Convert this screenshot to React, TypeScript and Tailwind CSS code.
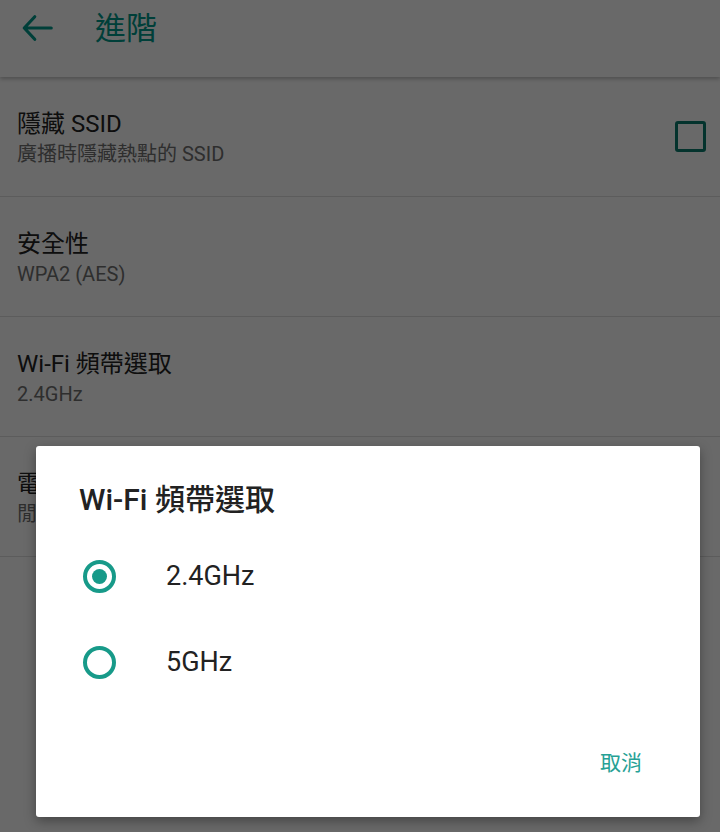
const font = "font-['Roboto','Noto_Sans_CJK_TC',sans-serif]";

type Row = { title: string; sub: string; check?: boolean };

const rows: Row[] = [
  { title: "隱藏 SSID", sub: "廣播時隱藏熱點的 SSID", check: true },
  { title: "安全性", sub: "WPA2 (AES)" },
  { title: "Wi-Fi 頻帶選取", sub: "2.4GHz" },
  { title: "電源管理", sub: "閒置時自動關閉熱點" },
];

function Radio({ on }: { on: boolean }) {
  return (
    <span className="w-[33px] h-[33px] rounded-full border-[4px] border-[#179a89] flex items-center justify-center">
      {on && <span className="w-[15px] h-[15px] rounded-full bg-[#179a89]" />}
    </span>
  );
}

export default function App() {
  return (
    <div className={`${font} relative w-[720px] h-[832px] overflow-hidden bg-[#fafafa]`}>
      <header className="h-[77px] bg-[#fafafa] shadow-[0_2px_4px_rgba(0,0,0,0.25)] relative z-10">
        <div className="h-[56px] flex items-center">
          <svg className="ml-[19px]" width="36" height="36" viewBox="0 0 24 24" fill="none" stroke="#009688" strokeWidth="2.1" strokeLinecap="round" strokeLinejoin="round">
            <path d="M21.5 12H3.5M10.5 4.5 3.5 12l7 7.5" />
          </svg>
          <span className="ml-[40px] text-[31px] text-[#009688] leading-none">進階</span>
        </div>
      </header>
      <div>
        {rows.map((r) => (
          <div key={r.title} className="h-[120px] border-b border-[#dcdcdc] flex items-center pl-[17px] pr-[14px]">
            <div className="flex-1 flex flex-col pt-[2px]">
              <span className="text-[24px] leading-[32px] text-[#222]">{r.title}</span>
              <span className="text-[20px] leading-[28px] text-[#6e6e6e]">{r.sub}</span>
            </div>
            {r.check && <span className="w-[31px] h-[31px] border-[3px] border-[#0a7a6c] rounded-[3px]" />}
          </div>
        ))}
      </div>

      <div className="absolute inset-0 bg-black/[0.58] z-20" />

      <div className="absolute z-30 left-[36px] top-[446px] w-[664px] h-[371px] bg-white rounded-[3px] shadow-[0_4px_12px_rgba(0,0,0,0.35)] flex flex-col">
        <h2 className="pl-[43px] pt-[34px] text-[30px] leading-[40px] font-medium text-[#222]">Wi-Fi 頻帶選取</h2>
        <div className="mt-[40px] flex flex-col gap-[53px]">
          {["2.4GHz", "5GHz"].map((v, i) => (
            <label key={v} className="flex items-center pl-[47px] h-[33px]">
              <Radio on={i === 0} />
              <span className="ml-[50px] text-[27px] text-[#222]">{v}</span>
            </label>
          ))}
        </div>
        <div className="mt-auto mb-[40px] flex justify-end pr-[58px]">
          <button className="text-[21px] leading-[28px] text-[#26a195]">取消</button>
        </div>
      </div>
    </div>
  );
}
